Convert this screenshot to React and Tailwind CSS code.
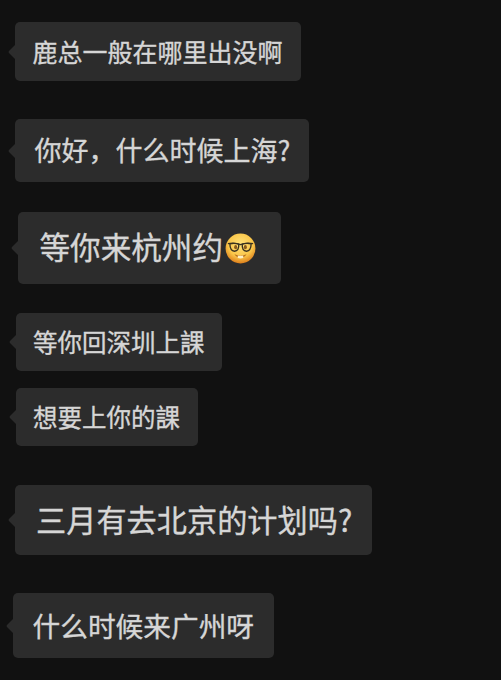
import React from "react";

const messages = [
  {
    text: "鹿总一般在哪里出没啊",
    row: "mt-[22px] ml-[15px]",
    bubble: "w-[285.5px] h-[59px] pl-[17.5px] pb-0 text-[25px]",
  },
  {
    text: "你好，什么时候上海?",
    row: "mt-[38px] ml-[15px]",
    bubble: "w-[294px] h-[63px] pl-[19.5px] pb-[2px] text-[27px]",
  },
  {
    text: "等你来杭州约",
    emoji: true,
    row: "mt-[30px] ml-[18px]",
    bubble: "w-[263px] h-[72px] pl-[21.5px] pb-[3px] text-[30.6px]",
  },
  {
    text: "等你回深圳上課",
    row: "mt-[29px] ml-[16px]",
    bubble: "w-[206px] h-[58px] pl-[17px] pb-0 text-[24.5px]",
  },
  {
    text: "想要上你的課",
    row: "mt-[17px] ml-[16px]",
    bubble: "w-[182px] h-[58px] pl-[17px] pb-0 text-[24.5px]",
  },
  {
    text: "三月有去北京的计划吗?",
    row: "mt-[39px] ml-[15px]",
    bubble: "w-[357px] h-[70px] pl-[21px] pb-[2px] text-[30.2px]",
  },
  {
    text: "什么时候来广州呀",
    row: "mt-[38px] ml-[13px]",
    bubble: "w-[261px] h-[65px] pl-[19.5px] pb-0 text-[27.7px]",
  },
];

function NerdFace() {
  return (
    <svg viewBox="0 0 32 32" className="ml-[2px] mt-[3px] size-[31px] shrink-0">
      <defs>
        <radialGradient id="face" cx="50%" cy="36%" r="64%">
          <stop offset="0" stopColor="#ffe27a" />
          <stop offset="0.65" stopColor="#fac548" />
          <stop offset="1" stopColor="#dd7f1c" />
        </radialGradient>
      </defs>
      <circle cx="16" cy="16" r="15.4" fill="url(#face)" />
      <ellipse cx="11" cy="14.6" rx="1.6" ry="2.1" fill="#8a5a1c" />
      <ellipse cx="21" cy="14.6" rx="1.6" ry="2.1" fill="#8a5a1c" />
      <g fill="none" stroke="#3a3220" strokeWidth="1.4">
        <path d="M5 11.2 Q10 9.9 14.2 11.6 Q14.6 18.6 9.8 18.8 Q5.2 18.6 5 11.2Z" />
        <path d="M17.8 11.6 Q22 9.9 27 11.2 Q26.8 18.6 22.2 18.8 Q17.4 18.6 17.8 11.6Z" />
        <path d="M3 11 Q10 9.6 16 12 Q22 9.6 29 11" />
      </g>
      <path d="M9.8 22 Q16 24.8 22.2 22 Q20.2 25.4 16 25.4 Q11.8 25.4 9.8 22Z" fill="#b8701e" />
      <path d="M13.2 23.2 Q16 24 18.8 23.2 V25.8 Q16 26.6 13.2 25.8Z" fill="#fff0c4" />
    </svg>
  );
}

function Message({ text, emoji, row, bubble }) {
  return (
    <div className={`relative ${row}`}>
      <svg
        viewBox="0 0 8 16"
        className="absolute top-1/2 -left-[7.5px] h-4 w-2 -translate-y-1/2"
        fill="#2c2c2c"
      >
        <path d="M8 0 L1 7 Q0 8 1 9 L8 16Z" />
      </svg>
      <div
        className={`flex items-center rounded-[5px] bg-[#2c2c2c] leading-none whitespace-nowrap text-[#d6d6d6] ${bubble}`}
      >
        <span className="[-webkit-text-stroke:0.35px_#d6d6d6]">{text}</span>
        {emoji && <NerdFace />}
      </div>
    </div>
  );
}

export default function App() {
  return (
    <main
      lang="zh-CN"
      className="flex h-[680px] w-[501px] flex-col items-start overflow-hidden bg-[#111111] font-['Noto_Sans_CJK_SC',sans-serif]"
    >
      {messages.map((m) => (
        <Message key={m.text} {...m} />
      ))}
    </main>
  );
}
